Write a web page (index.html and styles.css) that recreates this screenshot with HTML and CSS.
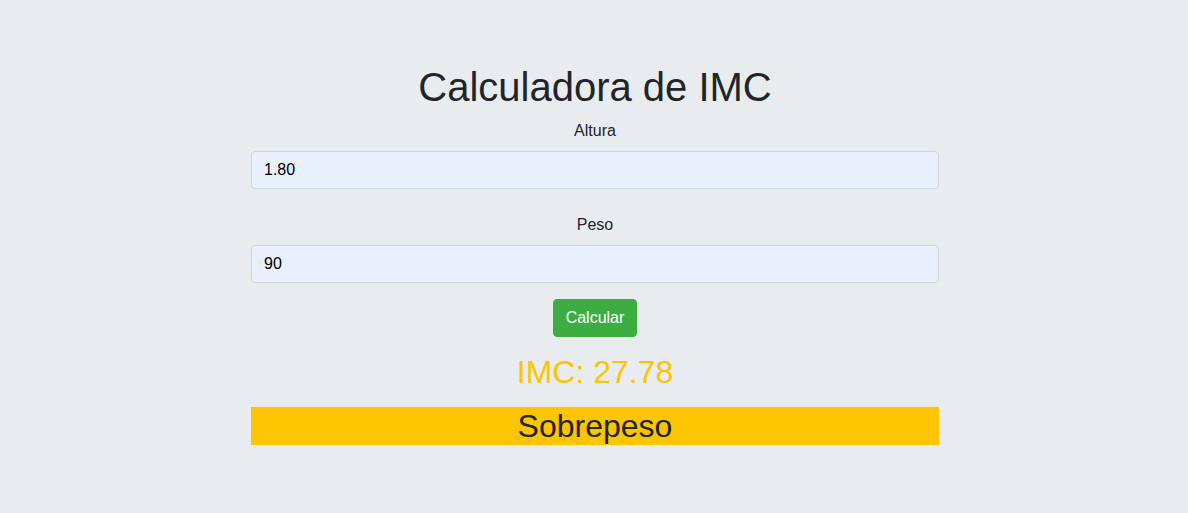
FILE: index.html
```html
<!DOCTYPE html>
<html lang="pt">
<head>
<meta charset="utf-8">
<title>Calculadora de IMC</title>
<link rel="stylesheet" href="styles.css">
</head>
<body>
<main class="container">
  <h1 class="title">Calculadora de IMC</h1>
  <div class="field">
    <label class="label" for="altura">Altura</label>
    <input class="input" id="altura" type="text" value="1.80">
  </div>
  <div class="field field-last">
    <label class="label" for="peso">Peso</label>
    <input class="input" id="peso" type="text" value="90">
  </div>
  <div class="actions">
    <button class="btn" type="button">Calcular</button>
  </div>
  <h2 class="result">IMC: 27.78</h2>
  <div class="status">Sobrepeso</div>
</main>
</body>
</html>
```

FILE: styles.css
```css
* { box-sizing: border-box; }
html, body { margin: 0; padding: 0; }
body {
  background: #e9ecef;
  font-family: "Liberation Sans", Arial, sans-serif;
  font-size: 16px;
  line-height: 1.5;
  color: #212529;
}
.container {
  width: 688px;
  margin: 0 0 0 calc(50% - 343px);
  padding-top: 63px;
  display: flex;
  flex-direction: column;
  text-align: center;
}
.title {
  margin: 0 0 8px;
  font-size: 40px;
  font-weight: 400;
  line-height: 1.2;
}
.field {
  display: flex;
  flex-direction: column;
  margin-bottom: 24px;
}
.field-last { margin-bottom: 16px; }
.label {
  margin-bottom: 8px;
}
.input {
  height: 38px;
  padding: 6px 12px;
  border: 1px solid #ced4da;
  border-radius: 4px;
  background: #e8f0fe;
  font-family: inherit;
  font-size: 16px;
  color: #000;
  text-align: left;
}
.actions {
  display: flex;
  justify-content: center;
  margin-bottom: 16px;
}
.btn {
  height: 38px;
  padding: 6px 12px;
  border: 1px solid #3cae41;
  border-radius: 4px;
  background: #3cae41;
  color: #fff;
  font-family: inherit;
  font-size: 16px;
  line-height: 1.5;
}
.result {
  margin: 0 0 16px;
  font-size: 32px;
  font-weight: 400;
  line-height: 1.2;
  color: #fcc500;
}
.status {
  height: 38px;
  background: #fcc500;
  font-size: 32px;
  line-height: 38px;
  color: #212529;
}
```
